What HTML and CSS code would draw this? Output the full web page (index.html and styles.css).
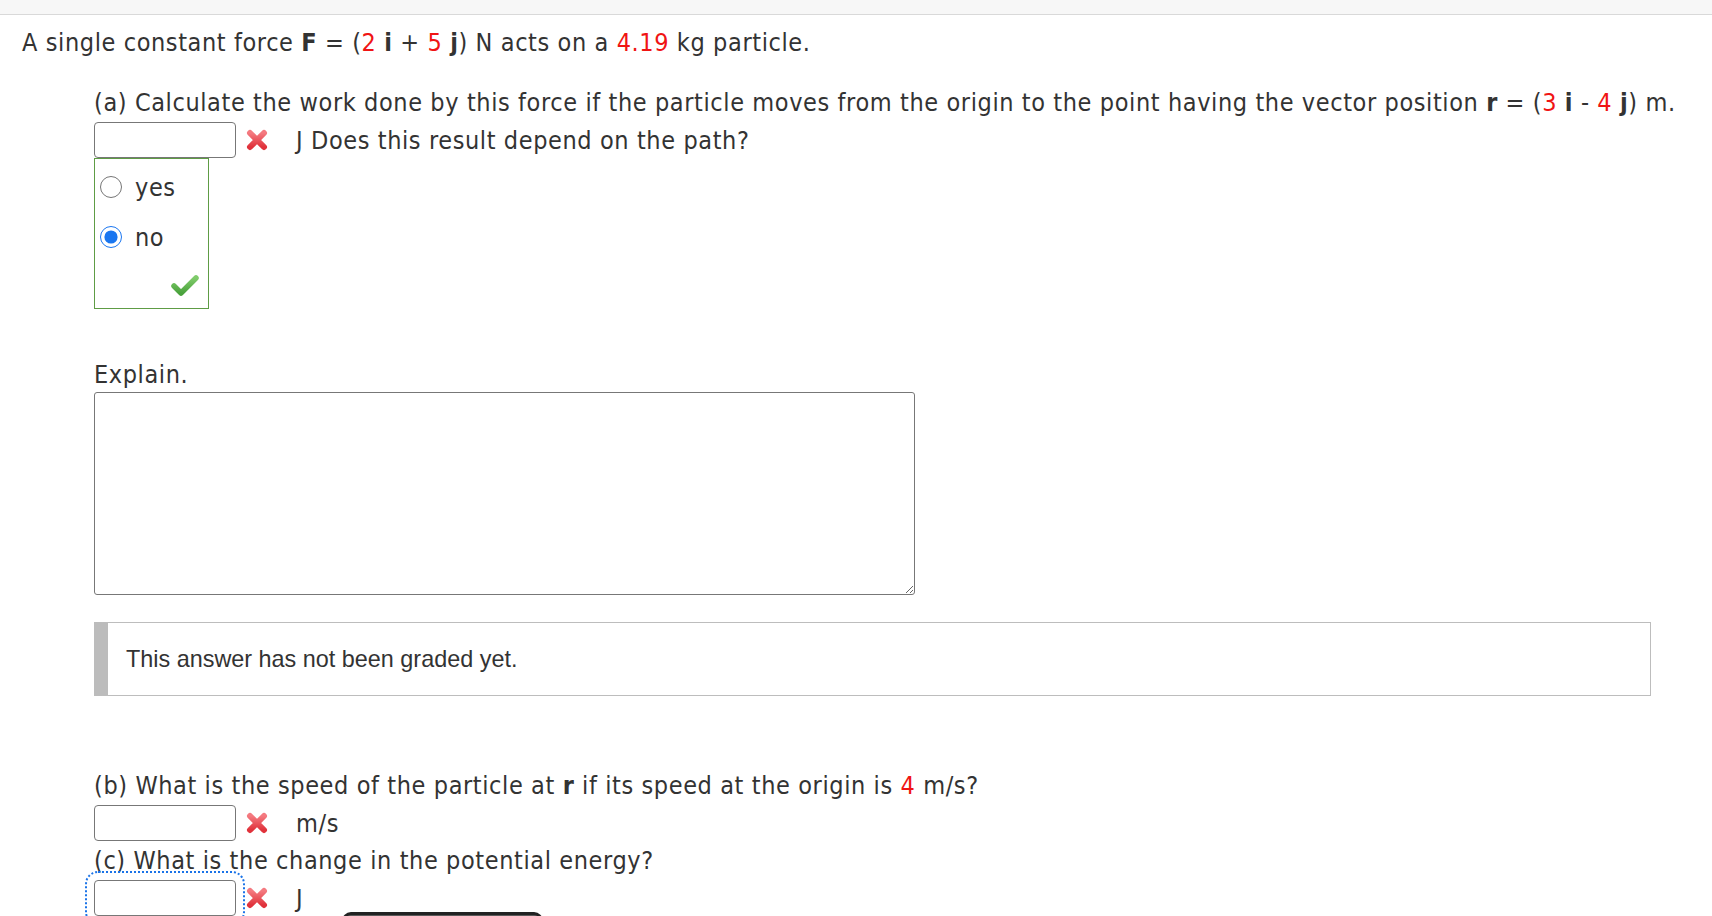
FILE: index.html
```html
<!DOCTYPE html>
<html>
<head>
<meta charset="utf-8">
<link rel="stylesheet" href="styles.css">
</head>
<body>
<div class="topbar"></div>
<main class="page">
  <div class="line intro">A single constant force <b>F</b> = (<span class="red">2</span> <b>i</b> + <span class="red">5</span> <b>j</b>) N acts on a <span class="red">4.19</span> kg particle.</div>
  <section class="part">
    <div class="line q-a">(a) Calculate the work done by this force if the particle moves from the origin to the point having the vector position <b>r</b> = (<span class="red">3</span> <b>i</b> - <span class="red">4</span> <b>j</b>) m.</div>
    <div class="answer-row">
      <input class="num" type="text">
      <svg class="xmark" viewBox="0 0 24 24" width="24" height="24"><defs><linearGradient id="xg" x1="0" y1="0" x2="0" y2="1"><stop offset="0" stop-color="#f47a80"/><stop offset="1" stop-color="#e0323b"/></linearGradient></defs><path d="M5 5 L19 19 M19 5 L5 19" stroke="url(#xg)" stroke-width="6" stroke-linecap="round"/></svg>
      <span class="unit">J Does this result depend on the path?</span>
    </div>
    <div class="choices">
      <label class="choice"><input type="radio" name="p"><span>yes</span></label>
      <label class="choice"><input type="radio" name="p" checked><span>no</span></label>
      <div class="check-wrap"><svg class="check" viewBox="0 0 28 24" width="28" height="24"><defs><linearGradient id="cg" x1="0" y1="0" x2="0" y2="1"><stop offset="0" stop-color="#7fcb6a"/><stop offset="1" stop-color="#4aa23c"/></linearGradient></defs><path d="M3 13 L10 20 L25 5" fill="none" stroke="url(#cg)" stroke-width="5.5" stroke-linecap="round" stroke-linejoin="round"/></svg></div>
    </div>
    <div class="line explain">Explain.</div>
    <textarea class="essay"></textarea>
    <div class="graded">This answer has not been graded yet.</div>
    <div class="line q-b">(b) What is the speed of the particle at <b>r</b> if its speed at the origin is <span class="red">4</span> m/s?</div>
    <div class="answer-row">
      <input class="num" type="text">
      <svg class="xmark" viewBox="0 0 24 24" width="24" height="24"><path d="M5 5 L19 19 M19 5 L5 19" stroke="url(#xg)" stroke-width="6" stroke-linecap="round"/></svg>
      <span class="unit">m/s</span>
    </div>
    <div class="line q-c">(c) What is the change in the potential energy?</div>
    <div class="answer-row last">
      <input class="num focused" type="text">
      <svg class="xmark" viewBox="0 0 24 24" width="24" height="24"><path d="M5 5 L19 19 M19 5 L5 19" stroke="url(#xg)" stroke-width="6" stroke-linecap="round"/></svg>
      <span class="unit">J</span>
      <div class="tip"></div>
    </div>
  </section>
</main>
</body>
</html>
```
FILE: styles.css
```css
html, body {
  margin: 0;
  padding: 0;
  background: #fff;
  overflow: hidden;
}
body {
  font-family: "DejaVu Sans", sans-serif;
  font-stretch: condensed;
  font-size: 25px;
  letter-spacing: 0.6px;
  color: #333;
}
.topbar {
  height: 14px;
  background: #f7f7f7;
  border-bottom: 1px solid #d9d9d9;
}
.page {
  padding: 0 22px;
}
.line {
  line-height: 33px;
  white-space: nowrap;
}
.red { color: #f01414; }
b { font-weight: bold; }
.intro { margin-top: 11px; }
.part {
  margin-left: 72px;
  margin-right: 39px;
}
.q-a { margin-top: 27px; }
.answer-row {
  display: flex;
  align-items: center;
  height: 36px;
  margin-top: 3px;
  position: relative;
}
.num {
  box-sizing: border-box;
  width: 142px;
  height: 36px;
  margin: 0;
  border: 1px solid #777;
  border-radius: 4px;
  background: #fff;
}
.xmark {
  margin-left: 9px;
  flex: none;
}
.unit {
  margin-left: 27px;
  line-height: 33px;
}
.choices {
  box-sizing: border-box;
  width: 115px;
  height: 151px;
  margin-top: 0;
  border: 1px solid #5e9c45;
  padding-top: 6px;
}
.choice {
  display: flex;
  align-items: center;
  height: 44px;
  margin-bottom: 6px;
}
.choice input {
  width: 22px;
  height: 22px;
  margin: 0 0 0 5px;
  accent-color: #1a76f0;
}
.choice span {
  margin-left: 13px;
}
.check-wrap {
  display: flex;
  justify-content: flex-end;
  padding-right: 9px;
  padding-top: 8px;
}
.explain { margin-top: 49px; }
.essay {
  display: block;
  box-sizing: border-box;
  width: 821px;
  height: 203px;
  margin: 1px 0 0;
  border: 1px solid #777;
  border-radius: 3px;
}
.graded {
  margin-top: 27px;
  height: 74px;
  box-sizing: border-box;
  border: 1px solid #bdbdbd;
  border-left: 14px solid #bcbcbc;
  padding-left: 18px;
  display: flex;
  align-items: center;
  font-family: "Liberation Sans", Arial, sans-serif;
  font-stretch: normal;
  letter-spacing: 0;
  font-size: 23.4px;
  color: #333;
}
.q-b { margin-top: 73px; }
.q-c { margin-top: 3px; }
.answer-row.last { margin-top: 3px; }
.focused {
  outline: 2px dotted #1a73e8;
  outline-offset: 7px;
}
.tip {
  position: absolute;
  left: 248px;
  top: 32px;
  width: 201px;
  height: 40px;
  box-sizing: border-box;
  background: #5a5a5a;
  border: 3px solid #222;
  border-radius: 9px;
}
```
